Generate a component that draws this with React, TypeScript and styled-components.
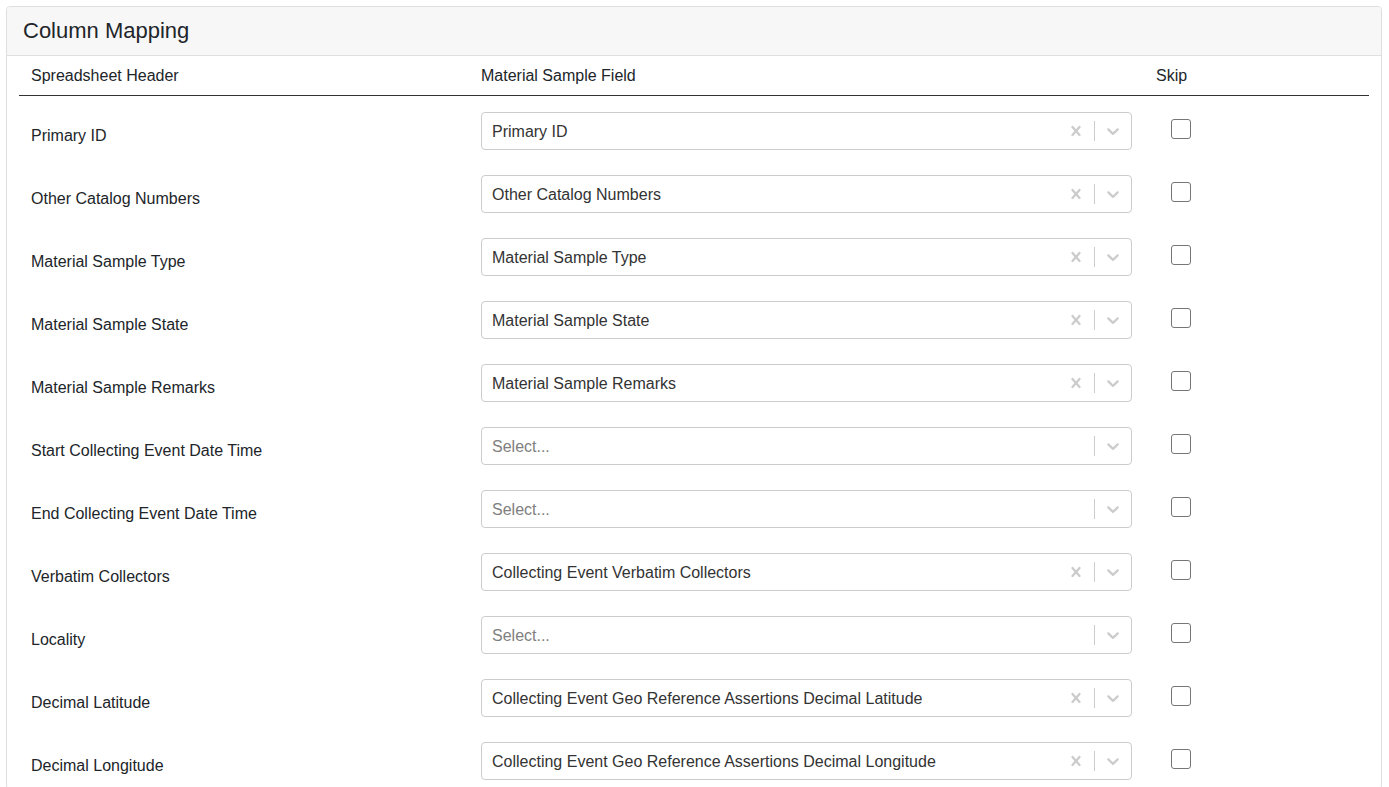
import React from "react";
import styled, { createGlobalStyle } from "styled-components";

const GlobalStyle = createGlobalStyle`
  html, body {
    margin: 0;
    padding: 0;
    overflow: hidden;
    background: #ffffff;
  }
  body {
    font-family: "Liberation Sans", Arial, sans-serif;
    font-size: 16px;
    color: #212529;
  }
  * { box-sizing: border-box; }
`;

const Page = styled.div`
  padding: 6px 7px 0 6px;
`;

const Card = styled.section`
  border: 1px solid #dfdfdf;
  border-radius: 4px;
  background: #fff;
`;

const CardHeader = styled.header`
  background: #f7f7f7;
  border-bottom: 1px solid #dfdfdf;
  padding: 12px 16px;
  border-radius: 4px 4px 0 0;
`;

const Title = styled.h2`
  margin: 0;
  font-size: 22px;
  font-weight: 400;
  line-height: 24px;
  color: #212529;
`;

const CardBody = styled.div`
  padding: 0 12px;
`;

const Grid = styled.div`
  display: grid;
  grid-template-columns: 450px 675px 225px;
`;

const HeadRow = styled(Grid)`
  border-bottom: 1px solid #333;
`;

const HeadCell = styled.div`
  padding: 8px 12px 7px;
  line-height: 24px;
`;

const LabelCell = styled.div`
  padding: 28px 12px 11px;
  line-height: 24px;
`;

const SelectCell = styled.div`
  padding: 16px 12px 9px;
`;

const SkipCell = styled.div`
  padding: 23px 12px 0 27px;
`;

const SelectBox = styled.div`
  display: flex;
  align-items: center;
  height: 38px;
  border: 1px solid #cccccc;
  border-radius: 4px;
  background: #fff;
`;

const ValueText = styled.div<{ $placeholder?: boolean }>`
  flex: 1;
  padding: 3px 8px 1px 10px;
  line-height: 24px;
  color: ${(p) => (p.$placeholder ? "#808080" : "#333333")};
  white-space: nowrap;
  overflow: hidden;
`;

const Indicator = styled.div`
  display: flex;
  padding: 8px;
  color: #cccccc;
`;

const Separator = styled.span`
  align-self: stretch;
  width: 1px;
  margin: 8px 0;
  background: #cccccc;
`;

const CheckBox = styled.span`
  display: block;
  width: 20px;
  height: 20px;
  border: 1px solid #767676;
  border-radius: 3px;
  background: #fff;
`;

const ClearIcon = () => (
  <svg width="20" height="20" viewBox="0 0 20 20" fill="currentColor" aria-hidden>
    <path d="M14.348 14.849c-0.469 0.469-1.229 0.469-1.697 0l-2.651-3.030-2.651 3.029c-0.469 0.469-1.229 0.469-1.697 0-0.469-0.469-0.469-1.229 0-1.697l2.758-3.15-2.759-3.152c-0.469-0.469-0.469-1.228 0-1.697s1.228-0.469 1.697 0l2.652 3.031 2.651-3.031c0.469-0.469 1.228-0.469 1.697 0s0.469 1.229 0 1.697l-2.758 3.152 2.758 3.15c0.469 0.469 0.469 1.229 0 1.698z" />
  </svg>
);

const ChevronIcon = () => (
  <svg width="20" height="20" viewBox="0 0 20 20" fill="currentColor" aria-hidden>
    <path d="M4.516 7.548c0.436-0.446 1.043-0.481 1.576 0l3.908 3.747 3.908-3.747c0.533-0.481 1.141-0.446 1.574 0 0.436 0.445 0.408 1.197 0 1.615-0.406 0.418-4.695 4.502-4.695 4.502-0.217 0.223-0.502 0.335-0.787 0.335s-0.57-0.112-0.789-0.335c0 0-4.287-4.084-4.695-4.502s-0.436-1.17 0-1.615z" />
  </svg>
);

const rows: { header: string; field?: string }[] = [
  { header: "Primary ID", field: "Primary ID" },
  { header: "Other Catalog Numbers", field: "Other Catalog Numbers" },
  { header: "Material Sample Type", field: "Material Sample Type" },
  { header: "Material Sample State", field: "Material Sample State" },
  { header: "Material Sample Remarks", field: "Material Sample Remarks" },
  { header: "Start Collecting Event Date Time" },
  { header: "End Collecting Event Date Time" },
  { header: "Verbatim Collectors", field: "Collecting Event Verbatim Collectors" },
  { header: "Locality" },
  { header: "Decimal Latitude", field: "Collecting Event Geo Reference Assertions Decimal Latitude" },
  { header: "Decimal Longitude", field: "Collecting Event Geo Reference Assertions Decimal Longitude" },
];

const FieldSelect = ({ value }: { value?: string }) => (
  <SelectBox>
    <ValueText $placeholder={!value}>{value ?? "Select..."}</ValueText>
    {value && (
      <Indicator>
        <ClearIcon />
      </Indicator>
    )}
    <Separator />
    <Indicator>
      <ChevronIcon />
    </Indicator>
  </SelectBox>
);

export default function App() {
  return (
    <>
      <GlobalStyle />
      <Page>
        <Card>
          <CardHeader>
            <Title>Column Mapping</Title>
          </CardHeader>
          <CardBody>
            <HeadRow>
              <HeadCell>Spreadsheet Header</HeadCell>
              <HeadCell>Material Sample Field</HeadCell>
              <HeadCell>Skip</HeadCell>
            </HeadRow>
            {rows.map((r) => (
              <Grid key={r.header}>
                <LabelCell>{r.header}</LabelCell>
                <SelectCell>
                  <FieldSelect value={r.field} />
                </SelectCell>
                <SkipCell>
                  <CheckBox />
                </SkipCell>
              </Grid>
            ))}
          </CardBody>
        </Card>
      </Page>
    </>
  );
}
